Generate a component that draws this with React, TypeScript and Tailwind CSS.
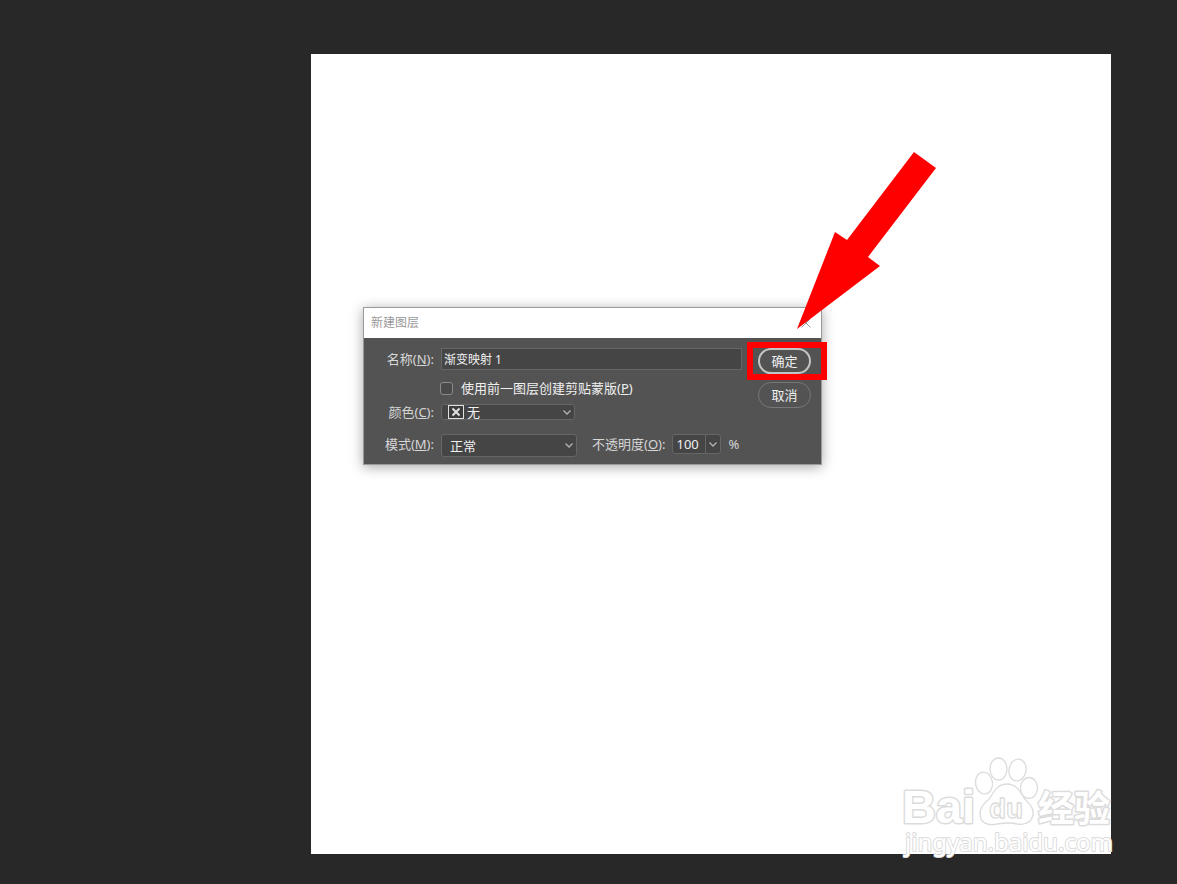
import type { ReactNode } from 'react'
import clsx from 'clsx'

const fieldStyle = 'border border-[#666666] bg-[#454545] text-[#f0f0f0] outline-none'

function FieldLabel({ htmlFor, text, hotkey, className }: { htmlFor: string; text: string; hotkey: string; className?: string }) {
  return (
    <label htmlFor={htmlFor} className={clsx('shrink-0 whitespace-nowrap text-right text-[#d6d6d6]', className)}>
      {text}(<u>{hotkey}</u>):
    </label>
  )
}

function Chevron({ className }: { className?: string }) {
  return (
    <svg viewBox="0 0 8 5" className={clsx('pointer-events-none h-[5px] w-2', className)} fill="none" stroke="#b4b4b4" strokeWidth="1.3">
      <path d="M0.5 0.5 4 4 7.5 0.5" />
    </svg>
  )
}

function SelectBox({ id, value, className, children }: { id: string; value: string; className: string; children?: ReactNode }) {
  return (
    <div className="relative">
      <select id={id} defaultValue={value} className={clsx('block appearance-none rounded-[3px]', fieldStyle, className)}>
        <option>{value}</option>
      </select>
      {children}
      <div className="pointer-events-none absolute inset-y-0 right-1 flex items-center">
        <Chevron />
      </div>
    </div>
  )
}

function NewLayerDialog() {
  return (
    <section
      role="dialog"
      aria-labelledby="dialog-title"
      className="absolute left-[52px] top-[253px] w-[459px] border border-[#9a9a9a] bg-[#535353] text-[13px] leading-4 shadow-[0_2px_12px_rgba(0,0,0,0.35)]"
    >
      <header className="flex h-[30px] items-center justify-between bg-white pl-[7px] pr-[10px]">
        <h1 id="dialog-title" className="text-xs text-[#999999]">新建图层</h1>
        <button type="button" aria-label="关闭">
          <svg viewBox="0 0 10 10" className="size-[10px]" stroke="#999999" strokeWidth="1">
            <path d="M0.5 0.5 9.5 9.5M9.5 0.5 0.5 9.5" />
          </svg>
        </button>
      </header>

      <form className="flex gap-4 pb-[7px] pr-[10px] pt-[10px]">
        <div className="flex-1">
          <div className="flex h-[22px] items-center gap-[7px]">
            <FieldLabel htmlFor="name" text="名称" hotkey="N" className="w-[70px]" />
            <input id="name" defaultValue="渐变映射 1" className={clsx('h-[22px] min-w-0 flex-1 px-[2px] text-xs', fieldStyle)} />
          </div>

          <div className="mt-[10px] flex h-4 items-center gap-2 pl-[76px]">
            <input id="clip" type="checkbox" className="size-[13px] appearance-none rounded-[3px] border border-[#8a8a8a] bg-[#4a4a4a]" />
            <label htmlFor="clip" className="whitespace-nowrap text-[#f0f0f0]">
              使用前一图层创建剪贴蒙版(<u>P</u>)
            </label>
          </div>

          <div className="mt-2 flex h-4 items-center gap-[7px]">
            <FieldLabel htmlFor="color" text="颜色" hotkey="C" className="w-[70px]" />
            <SelectBox id="color" value="无" className="h-4 w-[134px] pl-[25px] leading-[14px]">
              <svg viewBox="0 0 16 14" className="pointer-events-none absolute left-[7px] top-px h-[14px] w-4" fill="#3c3c3c" stroke="#e0e0e0">
                <rect x="0.5" y="0.5" width="15" height="13" />
                <path d="M4.5 3.5 11.5 10.5M11.5 3.5 4.5 10.5" strokeWidth="2" />
              </svg>
            </SelectBox>
          </div>

          <div className="mt-[14px] flex items-start gap-[7px]">
            <FieldLabel htmlFor="mode" text="模式" hotkey="M" className="w-[70px] leading-5" />
            <SelectBox id="mode" value="正常" className="h-[23px] w-[136px] pl-2" />
            <div className="flex gap-[7px] pl-2">
              <FieldLabel htmlFor="opacity" text="不透明度" hotkey="O" className="leading-5" />
              <div className="flex">
                <input id="opacity" defaultValue="100" className={clsx('h-5 w-[34px] rounded-l-[3px] px-[3px]', fieldStyle)} />
                <button type="button" aria-label="调整不透明度" className={clsx('-ml-px flex h-5 w-4 items-center justify-center rounded-r-[3px]', fieldStyle)}>
                  <Chevron />
                </button>
              </div>
              <span className="leading-5 text-[#d6d6d6]">%</span>
            </div>
          </div>
        </div>

        <div className="flex w-[53px] shrink-0 flex-col gap-2">
          <div className="relative">
            <button type="submit" className="block h-[26px] w-full rounded-full border-2 border-[#c4c4c4] text-[#f0f0f0]">确定</button>
            <div className="pointer-events-none absolute -bottom-1.5 -left-[11px] -right-4 -top-1.5 border-[6px] border-[#ff0000]" />
          </div>
          <button type="button" className="h-[26px] rounded-full border border-[#777777] text-[#f0f0f0]">取消</button>
        </div>
      </form>
    </section>
  )
}

function Arrow() {
  return (
    <svg viewBox="0 0 140 178" className="pointer-events-none absolute left-[486px] top-[98px] w-[140px]" fill="#ff0000">
      <path d="M117 0 139 16 71 105 83 114 0 177 38 80 50 88Z" />
    </svg>
  )
}

function Watermark() {
  return (
    <svg
      viewBox="0 0 214 104"
      className="pointer-events-none absolute -bottom-1.5 -right-1 w-[214px] font-['Noto_Sans','Noto_Sans_CJK_SC',sans-serif]"
      fill="#ffffff"
      stroke="#dcdcdc"
      strokeWidth="1.3"
      strokeLinejoin="round"
    >
      <text x="1" y="67" fontSize="47" fontWeight="700" strokeWidth="3" paintOrder="stroke" className="font-['Liberation_Sans',sans-serif]">Bai</text>
      <ellipse cx="83" cy="27" rx="8.5" ry="11" transform="rotate(-8 83 27)" />
      <ellipse cx="97.5" cy="13" rx="8.5" ry="11" />
      <ellipse cx="116.5" cy="14" rx="8.5" ry="11" transform="rotate(10 116.5 14)" />
      <ellipse cx="128" cy="32" rx="8.5" ry="10.5" />
      <path d="M106 28C115 28 119 35 123 42C128 48 133 51 132 59C130 68 122 69 116 68C108 66 103 67 96 68C87 70 79 67 79 58C79 50 84 47 89 42C93 35 97 28 106 28Z" />
      <text x="88" y="62" fontSize="28" fontWeight="700" className="font-['Liberation_Sans',sans-serif]">du</text>
      <text x="137" y="66" fontSize="36" fontWeight="700" strokeWidth="3" paintOrder="stroke">经验</text>
      <text x="4" y="95" fontSize="24" strokeWidth="2" paintOrder="stroke">jingyan.baidu.com</text>
    </svg>
  )
}

export default function App() {
  return (
    <main className="flex min-h-screen bg-[#282828] pb-[30px] pl-[311px] pr-[66px] pt-[54px] font-['Noto_Sans','Noto_Sans_CJK_SC',sans-serif]">
      <div className="relative flex-1 bg-white">
        <NewLayerDialog />
        <Arrow />
        <Watermark />
      </div>
    </main>
  )
}
